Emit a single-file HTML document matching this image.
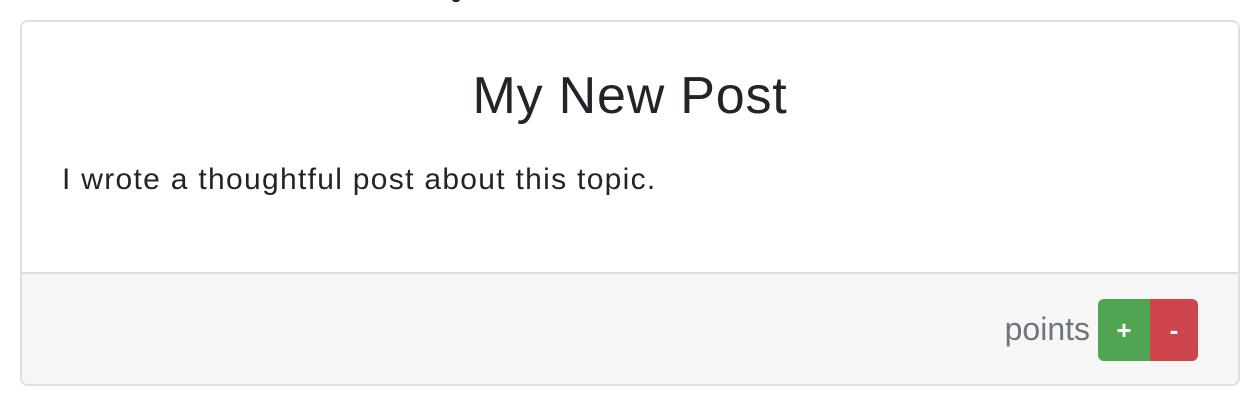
<!DOCTYPE html>
<html><head><style>
body{margin:0;width:1258px;height:404px;background:#fff;font-family:"Liberation Sans",sans-serif;position:relative;overflow:hidden}
.card{position:absolute;left:20px;top:20px;width:1216px;height:362px;border:2px solid #dfdfdf;border-radius:8px;overflow:hidden}
.top{position:absolute;left:0;top:0;right:0;height:250px;background:#fff;border-bottom:2px solid #dcdcdc}
h1{position:absolute;left:0;right:0;top:44px;margin:0;text-align:center;font-weight:normal;font-size:52px;letter-spacing:0.8px;color:#212529;line-height:60px}
p{position:absolute;left:40px;top:140px;margin:0;font-size:30px;letter-spacing:1.3px;color:#212529;line-height:36px}
.foot{position:absolute;left:0;right:0;top:252px;bottom:0;background:#f6f6f6}
.pts{position:absolute;right:148px;top:35px;font-size:32px;color:#6c757d;line-height:40px}
.b{position:absolute;top:25px;height:62px;width:52px;color:#fff;font-size:26px;font-weight:bold;text-align:center;line-height:62px}
.plus{left:1076px;background:#50a452;border-radius:6px 0 0 6px}
.minus{left:1128px;width:48px;background:#cd444b;border-radius:0 6px 6px 0}
</style></head><body>
<div style="position:absolute;left:452px;top:-6px;width:8px;height:8px;background:#222;border-radius:0 0 3px 3px"></div>
<div class="card">
<div class="top"><h1>My New Post</h1><p>I wrote a thoughtful post about this topic.</p></div>
<div class="foot"><span class="pts">points</span><div class="b plus">+</div><div class="b minus">-</div></div>
</div>
</body></html>
